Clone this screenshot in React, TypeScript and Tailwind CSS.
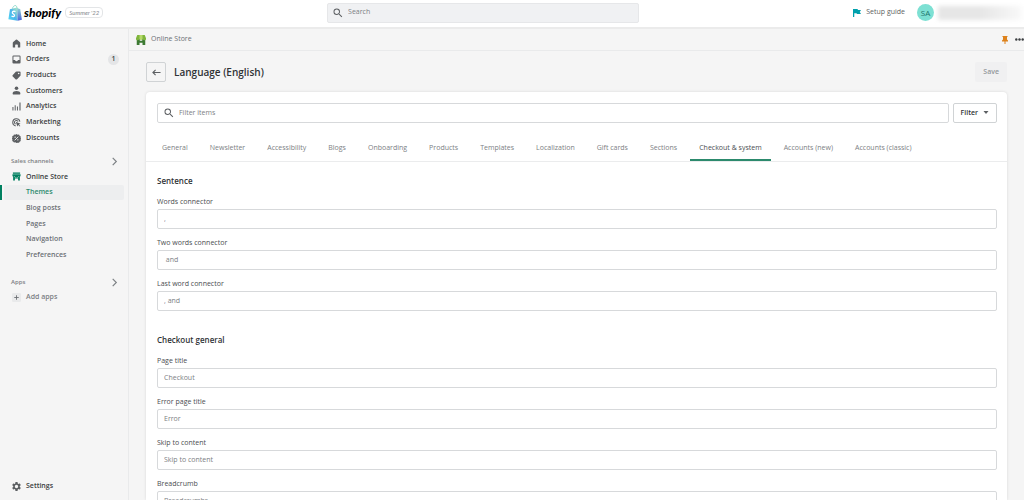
import type { ReactNode } from "react";
import { MdSearch, MdSettings } from "react-icons/md";

function HomeIcon() {
  return (
    <svg viewBox="0 0 20 20" className="size-[9px]" fill="currentColor" aria-hidden="true">
      <path d="M8.700 1.500a2 2 0 0 1 2.600 0l6 5.200A3 3 0 0 1 18.300 9v8.500a1.500 1.500 0 0 1-1.500 1.500H13v-5.500a1.500 1.500 0 0 0-1.500-1.500h-3A1.500 1.500 0 0 0 7 13.500V19H3.200a1.500 1.500 0 0 1-1.500-1.500V9a3 3 0 0 1 1-2.300z" />
    </svg>
  );
}

function OrdersIcon() {
  return (
    <svg viewBox="0 0 20 20" className="size-[9px]" aria-hidden="true">
      <path
        fill="currentColor"
        fillRule="evenodd"
        d="M3.500 1h13A2.500 2.500 0 0 1 19 3.500v13a2.500 2.500 0 0 1-2.500 2.500h-13A2.500 2.500 0 0 1 1 16.500v-13A2.500 2.500 0 0 1 3.500 1zM3.200 3.200V11H6c.7 0 1 .4 1.200 1 .4 1 1.400 1.700 2.800 1.700s2.400-.7 2.800-1.700c.2-.6.500-1 1.200-1h2.800V3.200z"
      />
    </svg>
  );
}

function TagIcon() {
  return (
    <svg viewBox="0 0 20 20" className="size-[9px]" aria-hidden="true">
      <path
        fill="currentColor"
        fillRule="evenodd"
        d="M10.500 1H17a2 2 0 0 1 2 2v6.200a3 3 0 0 1-.9 2.100l-6.800 6.900a2.500 2.500 0 0 1-3.600 0l-5.900-5.900a2.500 2.500 0 0 1 0-3.600l6.600-6.800A3 3 0 0 1 10.500 1zm4.300 6.300a1.800 1.800 0 1 0 0-3.600 1.800 1.800 0 0 0 0 3.600z"
      />
    </svg>
  );
}

function CustomersIcon() {
  return (
    <svg viewBox="0 0 20 20" className="size-[9px]" fill="currentColor" aria-hidden="true">
      <circle cx="10" cy="5" r="4" />
      <path d="M1.500 18v-2.500C1.500 12.500 5.500 11 10 11s8.500 1.500 8.500 4.500V18a1 1 0 0 1-1 1h-15a1 1 0 0 1-1-1z" />
    </svg>
  );
}

function AnalyticsIcon() {
  return (
    <svg viewBox="0 0 20 20" className="size-[9px]" fill="currentColor" aria-hidden="true">
      <path d="M1 11h2.200v8H1zM6 7h2.200v12H6zM11 10h2.200v9H11zM16.500 1h2.500v18h-2.500z" />
    </svg>
  );
}

function MarketingIcon() {
  return (
    <svg viewBox="0 0 20 20" className="size-[9px]" fill="none" stroke="currentColor" strokeWidth="2.300" aria-hidden="true">
      <path d="M17.500 8A8 8 0 1 0 8 17.500" />
      <path d="M13.500 8A4.200 4.200 0 1 0 8 13.500" />
      <path d="M8.500 8.500l10.500 4-3.800 2 3.300 3.300-1.300 1.300-3.300-3.300-2 3.200z" fill="currentColor" stroke="none" />
    </svg>
  );
}

function DiscountsIcon() {
  return (
    <svg viewBox="0 0 20 20" className="size-[9px]" aria-hidden="true">
      <path
        fill="currentColor"
        d="M10 0l2.600 1.500 3-.2 1.300 2.700 2.500 1.700-.3 3L20.200 10l-1.100 2.300.3 3-2.500 1.700-1.300 2.700-3-.2L10 20l-2.600-1.500-3 .2L3.100 17 .6 15.300l.3-3L-.2 10l1.100-2.300-.3-3L3.100 4l1.300-2.700 3 .2z"
      />
      <path d="M6 14l8-8" stroke="#f5f5f5" strokeWidth="2" />
      <circle cx="7" cy="7" r="1.500" fill="#f5f5f5" />
      <circle cx="13" cy="13" r="1.500" fill="#f5f5f5" />
    </svg>
  );
}

function StoreIcon() {
  return (
    <svg viewBox="0 0 20 20" className="size-[9px] text-[#008060]" fill="currentColor" aria-hidden="true">
      <path d="M2 1h16v3H2z" />
      <path d="M1 5h18v3.500a2.800 2.800 0 0 1-5.300.8 3.700 3.700 0 0 1-7.400 0A2.800 2.800 0 0 1 1 8.500z" />
      <path d="M2.500 11h4v8h-4zM13.500 11h4v8h-4zM6 12.500h8v2H6z" />
    </svg>
  );
}

function StoreBadgeIcon() {
  return (
    <svg viewBox="0 0 20 20" className="size-[10px]" aria-hidden="true">
      <path fill="#3d7a33" d="M1.500 7h6v4.500h5V7h6v13H13v-4.500H7V20H1.500z" />
      <path fill="#7fb53c" d="M2.500 0h15L20 6.500a3.300 3.300 0 0 1-6.600 1.300h-6.800A3.300 3.300 0 0 1 0 6.500z" />
      <path fill="#b5d96a" d="M7 0h6v7a3 3 0 0 1-6 0z" />
    </svg>
  );
}

function BagLogo() {
  return (
    <svg viewBox="0 0 26 30" className="h-[16px] w-[14px]" aria-hidden="true">
      <defs>
        <linearGradient id="bag" x1="0" y1="1" x2="1" y2="0.2">
          <stop offset="0" stopColor="#52d8f2" />
          <stop offset="0.55" stopColor="#4ab4ec" />
          <stop offset="1" stopColor="#a4e4c8" />
        </linearGradient>
        <linearGradient id="bag-side" x1="0" y1="0" x2="0" y2="1">
          <stop offset="0" stopColor="#8fd6cf" />
          <stop offset="1" stopColor="#4a62dc" />
        </linearGradient>
      </defs>
      <path d="M8 7c1-4 3.500-6 5.700-6 2 0 2.700 2.300 2.800 5" fill="none" stroke="#7bd3c2" strokeWidth="1.500" />
      <path fill="url(#bag)" d="M3.500 8.200L17 4.500l.8 25.200L.6 26.500z" />
      <path fill="url(#bag-side)" d="M17 4.500l3 2.700 2.700.3L26 27.600l-8.200 2.100z" />
      <path
        d="M14 12.500c-3.500-1.800-6.300 0-6 2.200.3 2.200 4.200 2.400 4 5-.2 2.400-3.200 2.600-5.500 1"
        fill="none"
        stroke="#fff"
        strokeWidth="2.500"
      />
    </svg>
  );
}

function Chevron() {
  return (
    <svg viewBox="0 0 10 10" className="size-[9px]" fill="none" stroke="#7c8084" strokeWidth="1.300" aria-hidden="true">
      <path d="M3 1l4 4-4 4" />
    </svg>
  );
}

const mainNav: { label: string; icon: ReactNode; count?: number }[] = [
  { label: "Home", icon: <HomeIcon /> },
  { label: "Orders", icon: <OrdersIcon />, count: 1 },
  { label: "Products", icon: <TagIcon /> },
  { label: "Customers", icon: <CustomersIcon /> },
  { label: "Analytics", icon: <AnalyticsIcon /> },
  { label: "Marketing", icon: <MarketingIcon /> },
  { label: "Discounts", icon: <DiscountsIcon /> },
];

const storeNav = ["Themes", "Blog posts", "Pages", "Navigation", "Preferences"];

const tabs = [
  "General",
  "Newsletter",
  "Accessibility",
  "Blogs",
  "Onboarding",
  "Products",
  "Templates",
  "Localization",
  "Gift cards",
  "Sections",
  "Checkout & system",
  "Accounts (new)",
  "Accounts (classic)",
];

const groups = [
  {
    title: "Sentence",
    fields: [
      { label: "Words connector", value: ", " },
      { label: "Two words connector", value: " and " },
      { label: "Last word connector", value: ", and " },
    ],
  },
  {
    title: "Checkout general",
    fields: [
      { label: "Page title", value: "Checkout" },
      { label: "Error page title", value: "Error" },
      { label: "Skip to content", value: "Skip to content" },
      { label: "Breadcrumb", value: "Breadcrumbs" },
    ],
  },
];

function TopBar() {
  return (
    <header className="flex h-[29px] shrink-0 items-center border-b-2 border-[#ebebeb] bg-white pb-[2px]">
      <div className="flex flex-5 items-center pl-[8px]">
        <a href="#home" className="flex items-center gap-[2px]">
          <BagLogo />
          <span className="font-['Lato','Open_Sans',sans-serif] text-[12px] leading-[16px] font-black text-black italic">
            shopify
          </span>
        </a>
        <span className="ml-[4px] rounded-[4px] border border-[#e3e5e7] px-[3px] font-['Lato','Open_Sans',sans-serif] text-[6px] leading-[9px] text-[#85898d] italic">
          Summer '22
        </span>
      </div>
      <label className="flex h-[20px] w-[312px] items-center gap-[4px] rounded-[2px] border border-[#e6e7e9] bg-[#f0f1f3] px-[4px]">
        <MdSearch className="size-[12px] text-[#5c5f62]" />
        <input
          type="search"
          aria-label="Search"
          placeholder="Search"
          className="min-w-0 flex-1 bg-transparent text-[7px] outline-none placeholder:text-[#7c8084]"
        />
      </label>
      <div className="flex flex-6 items-center justify-end pr-[2px]">
        <a href="#guide" className="flex items-center gap-[5px] text-[7px] text-[#5c5f62]">
          <svg viewBox="0 0 16 16" className="size-[8px]" fill="#00a0ac" aria-hidden="true">
            <path d="M0 0h9l1 2h6l-2.500 4L16 10H8L7 8.500H2.500V16H0z" />
          </svg>
          Setup guide
        </a>
        <button type="button" aria-label="Account" className="ml-[12px] flex items-center gap-[4px]">
          <span className="flex size-[17px] items-center justify-center rounded-full bg-[#7de0d3] text-[8px] text-[#20756c]">
            SA
          </span>
          <span className="h-[14px] w-[84px] bg-linear-to-r from-[#e6e6e6] via-[#e6e6e6] to-[#f9f9f9] blur-[2px]" />
        </button>
      </div>
    </header>
  );
}

function Sidebar() {
  return (
    <nav className="flex w-[129px] shrink-0 flex-col border-r border-[#e9eaeb] pt-[7px] pb-[6px] text-[7px] font-semibold text-[#3b3e41]">
      <ul className="grid h-[110px] grid-rows-7">
        {mainNav.map((item) => (
          <li key={item.label}>
            <a href={"#" + item.label} className="flex h-full items-center gap-[5px] pr-[9px] pl-[12px]">
              <span className="text-[#5c5f62]">{item.icon}</span>
              <span className="flex-1">{item.label}</span>
              {item.count && (
                <span className="flex size-[11px] items-center justify-center rounded-full bg-[#e4e5e7]">
                  {item.count}
                </span>
              )}
            </a>
          </li>
        ))}
      </ul>
      <button
        type="button"
        className="mt-[8px] flex h-[15px] items-center justify-between pr-[9px] pl-[11px] text-[6px] text-[#7c8084]"
      >
        Sales channels
        <Chevron />
      </button>
      <ul className="grid h-[94px] grid-rows-6">
        <li>
          <a href="#store" className="flex h-full items-center gap-[5px] pl-[12px]">
            <StoreIcon />
            Online Store
          </a>
        </li>
        {storeNav.map((label) =>
          label === "Themes" ? (
            <li key={label} className="flex border-l-2 border-[#008060] pr-[4px] pl-[2px]">
              <a
                href="#themes"
                aria-current="page"
                className="flex flex-1 items-center rounded-[2px] bg-[#edeeef] pl-[22px] text-[#2c8a6d]"
              >
                {label}
              </a>
            </li>
          ) : (
            <li key={label}>
              <a href={"#" + label} className="flex h-full items-center pl-[26px] text-[#6d7175]">
                {label}
              </a>
            </li>
          ),
        )}
      </ul>
      <button
        type="button"
        className="mt-[12px] flex h-[15px] items-center justify-between pr-[9px] pl-[11px] text-[6px] text-[#7c8084]"
      >
        Apps
        <Chevron />
      </button>
      <a href="#apps" className="flex h-[15px] items-center gap-[5px] pl-[12px] text-[#7c8084]">
        <svg viewBox="0 0 10 10" className="size-[9px]" aria-hidden="true">
          <rect width="10" height="10" rx="1.500" fill="#e9eaeb" />
          <path d="M5 2.500v5M2.500 5h5" stroke="#6d7175" strokeWidth="1" />
        </svg>
        Add apps
      </a>
      <a href="#settings" className="mt-auto flex h-[15px] items-center gap-[4px] pl-[11px]">
        <MdSettings className="size-[11px] text-[#5c5f62]" />
        Settings
      </a>
    </nav>
  );
}

function FieldRow({ label, value }: { label: string; value: string }) {
  const id = label.toLowerCase().replaceAll(" ", "-");
  return (
    <div className="flex flex-col gap-[1px]">
      <label htmlFor={id} className="text-[7px] leading-[12px] text-[#4a4d50]">
        {label}
      </label>
      <input
        id={id}
        defaultValue={value}
        className="h-[20px] w-full rounded-[2px] border border-[#d7d9db] bg-white px-[6px] pb-[2px] text-[7px] text-[#7c8084] outline-none focus:border-[#008060]"
      />
    </div>
  );
}

export default function App() {
  return (
    <div className="flex h-screen flex-col overflow-hidden bg-[#f5f5f5] font-['Open_Sans',sans-serif] text-[#303336]">
      <TopBar />
      <div className="flex min-h-0 flex-1">
        <Sidebar />
        <main className="flex min-w-0 flex-1 flex-col overflow-hidden">
          <div className="flex h-[22px] shrink-0 items-center border-b border-[#e9eaeb] pl-[7px] text-[7px] text-[#6d7175]">
            <StoreBadgeIcon />
            <span className="ml-[5px] flex-1">Online Store</span>
            <button type="button" aria-label="Pin" className="mr-[7px]">
              <svg viewBox="0 0 12 16" className="h-[8px] w-[6px]" fill="#dd821c" aria-hidden="true">
                <path d="M1 0h10v2h-1v5l2 2v2H7v5H5v-5H0V9l2-2V2H1z" />
              </svg>
            </button>
            <button type="button" aria-label="More actions">
              <svg viewBox="0 0 9 3" className="h-[3px] w-[9px]" fill="#3b3e41" aria-hidden="true">
                <circle cx="1.300" cy="1.500" r="1.200" />
                <circle cx="4.500" cy="1.500" r="1.200" />
                <circle cx="7.700" cy="1.500" r="1.200" />
              </svg>
            </button>
          </div>
          <div className="flex min-h-0 flex-1 flex-col px-[17px] pt-[11px]">
            <div className="flex h-[20px] shrink-0 items-center">
              <button
                type="button"
                aria-label="Back"
                className="flex size-[20px] items-center justify-center rounded-[2px] border border-[#d0d3d5]"
              >
                <svg viewBox="0 0 10 10" className="size-[9px]" fill="none" stroke="#5c5f62" strokeWidth="1.200" aria-hidden="true">
                  <path d="M9.500 5H1.200M4 2L1 5l3 3" />
                </svg>
              </button>
              <h1 className="ml-[8px] flex-1 text-[10px] font-semibold">Language (English)</h1>
              <button
                type="button"
                disabled
                className="h-[20px] rounded-[2px] bg-[#f0f0f1] px-[8px] text-[7px] font-semibold text-[#94989b]"
              >
                Save
              </button>
            </div>
            <section className="mt-[10px] flex-1 overflow-hidden rounded-t-[4px] bg-white shadow-[0_0_3px_rgba(0,0,0,0.12)]">
              <div className="flex gap-[4px] pt-[11px] pr-[10px] pl-[11px]">
                <label className="flex h-[20px] flex-1 items-center gap-[4px] rounded-[2px] border border-[#d7d9db] px-[5px]">
                  <MdSearch className="size-[12px] text-[#5c5f62]" />
                  <input
                    type="search"
                    aria-label="Filter items"
                    placeholder="Filter items"
                    className="min-w-0 flex-1 bg-transparent text-[7px] outline-none placeholder:text-[#7c8084]"
                  />
                </label>
                <button
                  type="button"
                  className="flex h-[20px] items-center gap-[5px] rounded-[2px] border border-[#d0d3d5] px-[7px] text-[7px] font-semibold"
                >
                  Filter
                  <svg viewBox="0 0 6 4" className="h-[4px] w-[6px]" fill="#5c5f62" aria-hidden="true">
                    <path d="M0.500 0h5L3 3z" />
                  </svg>
                </button>
              </div>
              <div role="tablist" className="mt-[12px] flex h-[27px] gap-[4px] border-b border-[#ebeced] px-[7px]">
                {tabs.map((tab) =>
                  tab === "Checkout & system" ? (
                    <button
                      key={tab}
                      type="button"
                      role="tab"
                      aria-selected="true"
                      className="border-t-2 border-b-2 border-t-transparent border-b-[#2c8a6d] px-[9px] text-[7px] whitespace-nowrap text-[#4a4d50]"
                    >
                      {tab}
                    </button>
                  ) : (
                    <button
                      key={tab}
                      type="button"
                      role="tab"
                      aria-selected="false"
                      className="px-[9px] text-[7px] whitespace-nowrap text-[#7c8084]"
                    >
                      {tab}
                    </button>
                  ),
                )}
              </div>
              <div className="flex flex-col gap-[23px] pt-[13px] pr-[10px] pl-[11px]">
                {groups.map((group) => (
                  <div key={group.title} className="flex flex-col gap-[8px]">
                    <h2 className="pb-[1px] text-[8px] leading-[12px] font-semibold">{group.title}</h2>
                    {group.fields.map((field) => (
                      <FieldRow key={field.label} label={field.label} value={field.value} />
                    ))}
                  </div>
                ))}
              </div>
            </section>
          </div>
        </main>
      </div>
    </div>
  );
}
